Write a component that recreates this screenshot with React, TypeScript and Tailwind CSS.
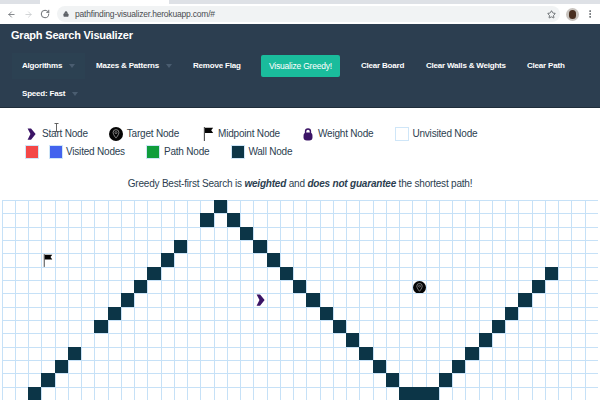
import { Fragment } from "react";
import { ArrowLeft, ArrowRight, RotateCw, Lock, Star, MoreVertical } from "lucide-react";

function Start({ className }: { className: string }) {
  return (
    <svg viewBox="0 0 12 16" className={className}>
      <path d="M0.8 0.5 H5.4 L11.5 8 L5.4 15.5 H0.8 L4.6 8 Z" fill="#3b1466" />
    </svg>
  );
}

function Target({ className }: { className: string }) {
  return (
    <svg viewBox="0 0 24 24" className={className}>
      <circle cx="12" cy="12" r="12" fill="#050505" />
      <path d="M12 4.5a5 5 0 0 0-5 5c0 3.6 5 9.5 5 9.5s5-5.900 5-9.500a5 5 0 0 0-5-5Z" fill="none" stroke="#a8a8a8" strokeWidth="1.3" />
      <circle cx="12" cy="9.600" r="1.800" fill="none" stroke="#a8a8a8" strokeWidth="1.100" />
    </svg>
  );
}

function Flag({ className }: { className: string }) {
  return (
    <svg viewBox="0 0 14 18" className={className}>
      <rect x="1" y="0" width="1.500" height="18" fill="#555" />
      <path d="M2.500 1 H13 L10.500 4.200 L13 7.600 H2.500 Z" fill="#050505" />
    </svg>
  );
}

function Weight({ className }: { className: string }) {
  return (
    <svg viewBox="0 0 12 16" className={className}>
      <path d="M3 6 V4.200 a3 3 0 0 1 6 0 V6" fill="none" stroke="#3b1466" strokeWidth="1.800" />
      <rect x="0.500" y="5.500" width="11" height="10" rx="4" fill="#3b1466" />
    </svg>
  );
}

function NavItem({ label, caret, cls }: { label: string; caret?: boolean; cls?: string }) {
  return (
    <a className={`flex h-[26px] items-center gap-[7px] whitespace-nowrap px-[11px] text-[8px] font-bold tracking-[-0.2px] text-white ${cls ?? ""}`}>
      {label}
      {caret && <span className="h-0 w-0 border-x-[3px] border-t-[4px] border-x-transparent border-t-[#4a5d70]" />}
    </a>
  );
}

const WALLS = new Set(
  [
    [16, 0], [15, 1], [17, 1], [13, 3], [12, 4], [11, 5], [10, 6], [9, 7], [8, 8], [7, 9],
    [5, 11], [4, 12], [3, 13], [2, 14],
    [18, 2], [19, 3], [20, 4], [21, 5], [22, 6], [23, 7], [24, 8], [25, 9], [26, 10], [27, 11], [28, 12], [29, 13],
    [30, 14], [31, 14], [32, 14], [33, 13], [34, 12], [35, 11], [36, 10], [37, 9], [38, 8], [39, 7], [40, 6], [41, 5],
  ].map(([c, r]) => `${c},${r}`)
);

function Cell({ c, r }: { c: number; r: number }) {
  const wall = WALLS.has(`${c},${r}`);
  return (
    <div className={`flex items-center justify-center overflow-visible border-t border-l ${wall ? "border-[#0c3547] bg-[#0c3547]" : "border-[#c6e1f7] bg-white"}`}>
      {c === 19 && r === 7 && <Start className="h-[12px] w-[9px] shrink-0" />}
      {c === 31 && r === 6 && <Target className="h-[13px] w-[13px] shrink-0" />}
      {c === 3 && r === 4 && <Flag className="h-[13px] w-[10px] shrink-0" />}
    </div>
  );
}

function Swatch({ className }: { className: string }) {
  return <span className={`h-[14px] w-[14px] shrink-0 border border-[#cfe6f8] ${className}`} />;
}

const legendText = "whitespace-nowrap text-[10px] tracking-[-0.2px] leading-[14px] text-[#2c3e50]";

export default function App() {
  return (
    <div className="relative flex h-[400px] w-[600px] flex-col overflow-hidden bg-white font-['Liberation_Sans',Arial,sans-serif]">
      {/* browser chrome */}
      <div className="h-[4px] shrink-0 bg-[#dee1e6]">
        <div className="ml-[40px] h-full w-[129px] bg-white" />
      </div>
      <div className="flex h-[20px] shrink-0 items-center bg-white pl-[7px] pr-[5px]">
        <ArrowLeft className="h-[9px] w-[9px] text-[#5f6368]" strokeWidth={2} />
        <ArrowRight className="ml-[8px] h-[9px] w-[9px] text-[#c4c7ca]" strokeWidth={2} />
        <RotateCw className="ml-[7px] h-[10px] w-[10px] text-[#5f6368]" strokeWidth={2.2} />
        <div className="ml-[7px] flex h-[16px] flex-1 items-center rounded-full bg-[#f1f3f4] pl-[6px] pr-[4px]">
          <Lock className="h-[6px] w-[6px] fill-[#5f6368] text-[#5f6368]" strokeWidth={2} />
          <span className="ml-[6px] text-[8.5px] tracking-[-0.2px] text-[#4a4d51]">pathfinding-visualizer.herokuapp.com/#</span>
          <Star className="ml-auto h-[9px] w-[9px] text-[#5f6368]" strokeWidth={2.4} />
        </div>
        <span className="ml-[6px] flex h-[13px] w-[13px] items-center justify-center rounded-full bg-[#c9c4bf]">
          <span className="h-[9px] w-[7px] rounded-full bg-[#4a2f20]" />
        </span>
        <MoreVertical className="ml-[6px] h-[10px] w-[10px] text-[#5f6368]" strokeWidth={2.4} />
      </div>
      {/* nav */}
      <div className="h-[84px] shrink-0 border-b border-[#1f2d3a] bg-[#2c3e50] pt-[4px]">
        <div className="pl-[11px] text-[11px] font-bold leading-[14px] tracking-[-0.2px] text-white">Graph Search Visualizer</div>
        <div className="mt-[11px] flex flex-wrap content-start items-center">
          <NavItem label="Algorithms" caret cls="ml-[12px] w-[73px] !pl-[10px] bg-[#2c4152]" />
          <NavItem label="Mazes & Patterns" caret cls="w-[97px]" />
          <NavItem label="Remove Flag" cls="w-[68px]" />
          <a className="ml-[11px] flex h-[22px] w-[79px] items-center justify-center rounded-[2px] bg-[#1abc9c] text-[8.5px] tracking-[-0.2px] text-white">Visualize Greedy!</a>
          <NavItem label="Clear Board" cls="ml-[10px] w-[65px]" />
          <NavItem label="Clear Walls & Weights" cls="w-[101px]" />
          <NavItem label="Clear Path" cls="w-[62px]" />
          <NavItem label="Speed: Fast" caret cls="ml-[12px] mt-[2px] w-[73px] !pl-[10px]" />
        </div>
      </div>
      {/* legend */}
      <div className="flex h-[92px] shrink-0 flex-col bg-white">
        <div className="mt-[19px] flex h-[14px] items-center">
          <Start className="ml-[27px] h-[12px] w-[9px] shrink-0" />
          <span className={`ml-[6px] ${legendText}`}>Start Node</span>
          <Target className="ml-[21px] h-[14px] w-[14px] shrink-0" />
          <span className={`ml-[4px] ${legendText}`}>Target Node</span>
          <Flag className="ml-[24px] h-[14px] w-[11px] shrink-0" />
          <span className={`ml-[4px] ${legendText}`}>Midpoint Node</span>
          <Weight className="ml-[23px] h-[13px] w-[10px] shrink-0" />
          <span className={`ml-[5px] ${legendText}`}>Weight Node</span>
          <Swatch className="ml-[22px] bg-white" />
          <span className={`ml-[3px] ${legendText}`}>Unvisited Node</span>
        </div>
        <div className="mt-[4px] flex h-[14px] items-center">
          <Swatch className="ml-[25px] bg-[#f44747]" />
          <Swatch className="ml-[10px] bg-[#4263ee]" />
          <span className={`ml-[3px] ${legendText}`}>Visited Nodes</span>
          <Swatch className="ml-[21px] bg-[#0f9d3c]" />
          <span className={`ml-[4px] ${legendText}`}>Path Node</span>
          <Swatch className="ml-[22px] bg-[#0c3547]" />
          <span className={`ml-[3px] ${legendText}`}>Wall Node</span>
        </div>
        <p className="mt-[18px] whitespace-nowrap text-center text-[10px] leading-[14px] tracking-[-0.2px] text-[#2c3e50]">
          Greedy Best-first Search is <b><i>weighted</i></b> and <b><i>does not guarantee</i></b> the shortest path!
        </p>
      </div>
      {/* grid */}
      <div className="ml-[1.5px] grid h-[200px] w-[598px] shrink-0 grid-cols-[repeat(45,13.25px)] grid-rows-[repeat(15,13.33px)]">
        {Array.from({ length: 15 }).map((_, r) => (
          <Fragment key={r}>
            {Array.from({ length: 45 }).map((_, c) => (
              <Cell key={c} c={c} r={r} />
            ))}
          </Fragment>
        ))}
      </div>
      {/* text cursor over the legend */}
      <svg viewBox="0 0 5 9" className="absolute left-[54px] top-[123px] h-[9px] w-[5px]">
        <path d="M0.500 0.500 H4.500 M2.500 0.500 V8.500 M0.500 8.500 H4.500" fill="none" stroke="#555" strokeWidth="0.900" />
      </svg>
    </div>
  );
}
